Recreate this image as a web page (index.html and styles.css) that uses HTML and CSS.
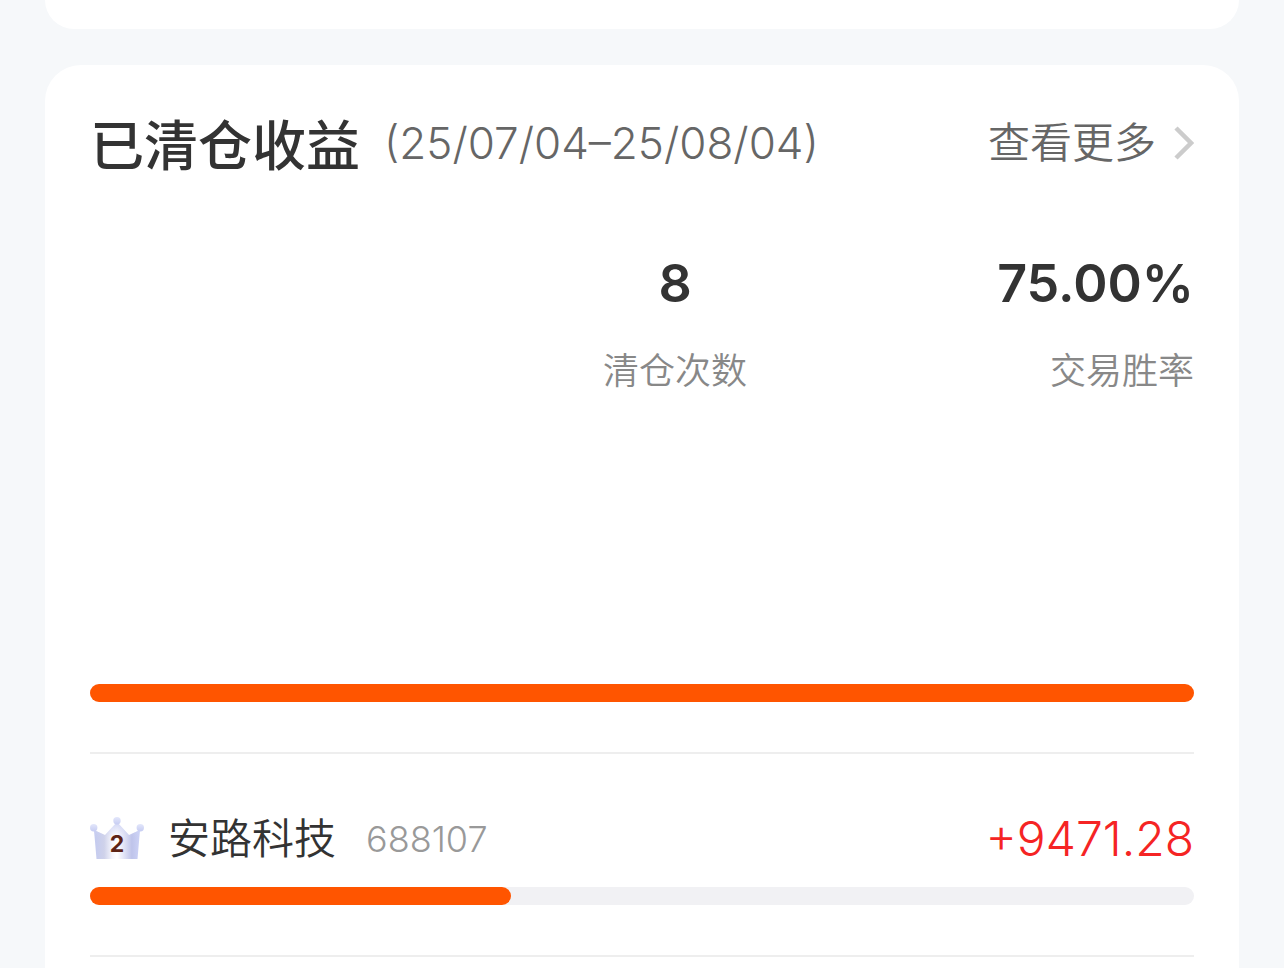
FILE: index.html
```html
<!DOCTYPE html>
<html lang="zh-CN">
<head>
    <meta charset="UTF-8">
    <meta name="viewport" content="width=device-width, initial-scale=1.0">
    <title>已清仓收益</title>
    <link rel="stylesheet" href="styles.css">
</head>
<body>

    <!-- End of the previous card -->
    <div class="card card-previous"></div>

    <main class="card card-profit">
        <header class="card-header">
            <h2>已清仓收益</h2>
            <span class="date-range">(25/07/04–25/08/04)</span>
            <a href="#" class="more-link">
                查看更多
                <svg class="chevron" viewBox="0 0 20 34" aria-hidden="true">
                    <path d="M2 2 L17 17 L2 32" fill="none" stroke="#cccccc" stroke-width="4.5"/>
                </svg>
            </a>
        </header>

        <!-- Summary numbers -->
        <div class="stats">
            <div class="stat stat-count">
                <div class="stat-value">8</div>
                <div class="stat-label">清仓次数</div>
            </div>
            <div class="stat stat-rate">
                <div class="stat-value">75.00%</div>
                <div class="stat-label">交易胜率</div>
            </div>
        </div>

        <!-- Ranking -->
        <div class="stock-list">
            <div class="stock-item">
                <div class="stock-row"></div>
                <div class="bar"><div class="bar-fill" style="width: 100%"></div></div>
            </div>
            <div class="stock-item">
                <div class="stock-row">
                    <svg class="crown" viewBox="0 0 54 44" aria-hidden="true">
                        <defs>
                            <linearGradient id="crown-body" x1="0" y1="0" x2="1" y2="0">
                                <stop offset="0" stop-color="#c3caf0"/>
                                <stop offset="0.22" stop-color="#cfd2ea"/>
                                <stop offset="0.4" stop-color="#f6f6fd"/>
                                <stop offset="0.5" stop-color="#ffffff"/>
                                <stop offset="0.62" stop-color="#e9eaf8"/>
                                <stop offset="0.82" stop-color="#bfc4ea"/>
                                <stop offset="1" stop-color="#cdd3f7"/>
                            </linearGradient>
                            <linearGradient id="crown-peak" x1="0" y1="0" x2="0" y2="1">
                                <stop offset="0" stop-color="#cfd4f4"/>
                                <stop offset="0.4" stop-color="#cfd4f4" stop-opacity="0"/>
                            </linearGradient>
                            <linearGradient id="crown-ball" x1="0" y1="0" x2="0" y2="1">
                                <stop offset="0" stop-color="#e3e7fb"/>
                                <stop offset="1" stop-color="#c6ccf2"/>
                            </linearGradient>
                        </defs>
                        <path d="M4 13 L15 18 L27 5 L39 18 L50 13 L47.5 42 L6.5 42 Z" fill="url(#crown-body)"/>
                        <path d="M4 13 L15 18 L27 5 L39 18 L50 13 L47.5 42 L6.5 42 Z" fill="url(#crown-peak)"/>
                        <circle cx="3.7" cy="10.7" r="3.7" fill="url(#crown-ball)"/>
                        <circle cx="27" cy="3.8" r="3.7" fill="url(#crown-ball)"/>
                        <circle cx="50.3" cy="10.7" r="3.7" fill="url(#crown-ball)"/>
                        <text x="27" y="35" class="crown-rank">2</text>
                    </svg>
                    <span class="stock-name">安路科技</span>
                    <span class="stock-code">688107</span>
                    <span class="stock-profit">+9471.28</span>
                </div>
                <div class="bar"><div class="bar-fill" style="width: 38.1%"></div></div>
            </div>
        </div>
    </main>

</body>
</html>
```
FILE: styles.css
```css
* {
    box-sizing: border-box;
}

body {
    font-family: Inter, 'Noto Sans CJK SC', sans-serif;
    background-color: #f6f8fa;
    color: #333333;
    margin: 0;
    padding: 0 45px;
    display: flex;
    flex-direction: column;
    min-height: 100vh;
}

.card {
    background-color: #ffffff;
}

.card-previous {
    height: 29px;
    border-radius: 0 0 36px 36px;
    margin-bottom: 36px;
}

.card-profit {
    flex: 1;
    padding: 42px 45px 0;
    border-radius: 36px 36px 0 0;
}

.card-header {
    display: flex;
    align-items: center;
    height: 72px;
}

h2 {
    font-family: 'Noto Sans CJK SC', sans-serif;
    font-size: 54px;
    font-weight: 500;
    line-height: 72px;
    margin: 0;
}

.date-range {
    font-size: 44px;
    font-weight: 300;
    line-height: 60px;
    color: #666666;
    margin-left: 24px;
}

.more-link {
    display: flex;
    align-items: center;
    gap: 18px;
    margin-left: auto;
    font-size: 42px;
    font-weight: 350;
    line-height: 60px;
    color: #666666;
    text-decoration: none;
}

.chevron {
    width: 20px;
    height: 34px;
}

.stats {
    display: grid;
    grid-template-columns: 40% 26% 34%;
    height: 372px;
    padding-top: 69px;
}

.stat-count {
    grid-column: 2;
    text-align: center;
}

.stat-rate {
    grid-column: 3;
    text-align: right;
}

.stat-value {
    font-size: 52px;
    font-weight: 600;
    line-height: 72px;
}

.stat-label {
    font-family: 'Noto Sans CJK SC', sans-serif;
    font-size: 36px;
    font-weight: 350;
    line-height: 48px;
    margin-top: 24px;
    color: #888888;
}

.stock-item {
    padding: 55px 0 50px;
    border-bottom: 2px solid #eeeeee;
}

.stock-row {
    display: flex;
    align-items: center;
    height: 60px;
    line-height: 60px;
    margin-bottom: 18px;
}

.crown {
    width: 54px;
    height: 44px;
}

.crown-rank {
    font-size: 23px;
    font-weight: 700;
    fill: #5e2416;
    text-anchor: middle;
}

.stock-name {
    font-size: 42px;
    font-weight: 350;
    margin-left: 24px;
}

.stock-code {
    font-size: 36px;
    font-weight: 300;
    color: #999999;
    margin-left: 30px;
}

.stock-profit {
    font-size: 48px;
    font-weight: 300;
    color: #f52424;
    margin-left: auto;
}

.bar {
    height: 18px;
    border-radius: 9px;
    background-color: #f1f1f4;
}

.bar-fill {
    height: 18px;
    border-radius: 9px;
    background-color: #ff5500;
}
```
